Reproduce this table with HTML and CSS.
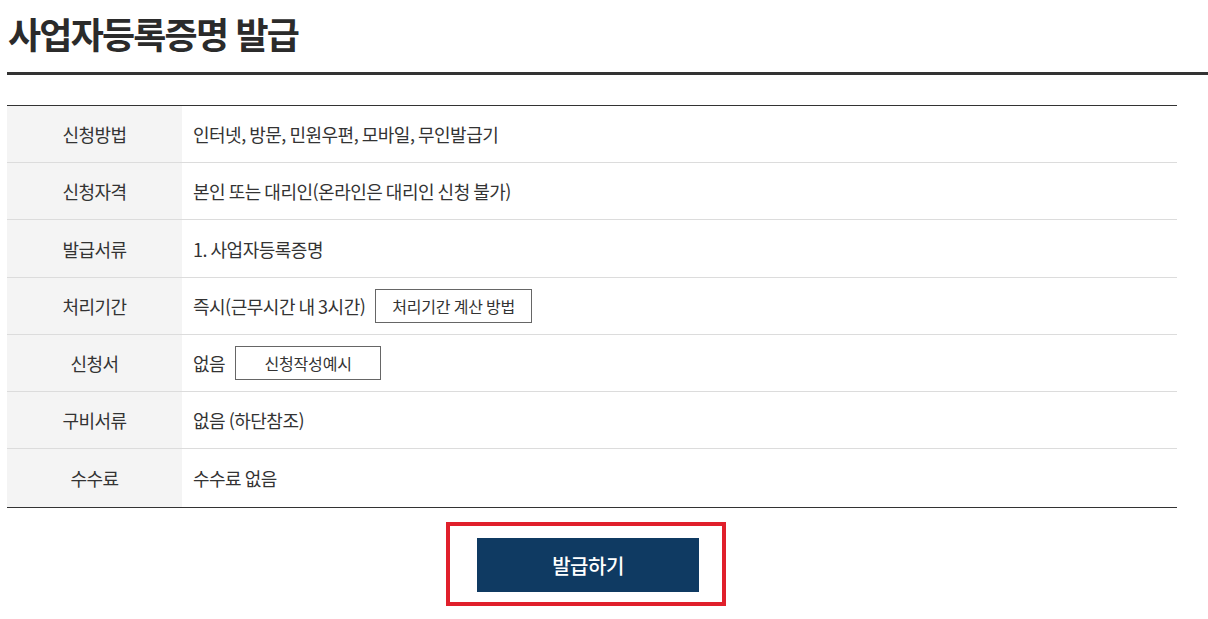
FILE: index.html
```html
<!DOCTYPE html>
<html lang="ko">
<head>
<meta charset="utf-8">
<title>사업자등록증명 발급</title>
<link rel="stylesheet" href="styles.css">
</head>
<body>
<div class="page">
  <h1 class="title">사업자등록증명 발급</h1>
  <div class="content">
    <table class="info">
      <tbody>
        <tr><th>신청방법</th><td>인터넷, 방문, 민원우편, 모바일, 무인발급기</td></tr>
        <tr><th>신청자격</th><td>본인 또는 대리인(온라인은 대리인 신청 불가)</td></tr>
        <tr class="tall"><th>발급서류</th><td>1. 사업자등록증명</td></tr>
        <tr><th>처리기간</th><td><span class="val">즉시(근무시간 내 3시간)</span><button class="small-btn">처리기간 계산 방법</button></td></tr>
        <tr><th>신청서</th><td><span class="val">없음</span><button class="small-btn wide">신청작성예시</button></td></tr>
        <tr><th>구비서류</th><td>없음 (하단참조)</td></tr>
        <tr><th>수수료</th><td>수수료 없음</td></tr>
      </tbody>
    </table>
    <div class="actions">
      <div class="highlight">
        <button class="issue-btn">발급하기</button>
      </div>
    </div>
  </div>
</div>
</body>
</html>
```
FILE: styles.css
```css
* { box-sizing: border-box; }
html, body { margin: 0; padding: 0; background: #fff; }
body {
  font-family: "Noto Sans CJK KR", "Noto Sans", sans-serif;
  color: #333;
}
.page {
  padding-left: 7px;
}
.title {
  margin: 0;
  padding: 8px 0 14px 1px;
  font-size: 36px;
  font-weight: 700;
  letter-spacing: -1.8px;
  line-height: 50px;
  color: #2b2b2b;
  border-bottom: 3px solid #333;
}
.content {
  width: 1170px;
  padding-top: 30px;
}
.info {
  width: 100%;
  border-collapse: collapse;
  border-top: 1px solid #333;
  border-bottom: 1px solid #333;
}
.info th, .info td {
  height: 57px;
  border-bottom: 1px solid #dcdcdc;
  font-size: 18px;
  letter-spacing: -0.5px;
  word-spacing: -1px;
  color: #333;
  padding: 0;
}
.info tr.tall th, .info tr.tall td { height: 58px; }
.info tr:last-child th, .info tr:last-child td { border-bottom: none; height: 59px; }
.info th {
  width: 175px;
  background: #f4f4f4;
  font-weight: 400;
  text-align: center;
}
.info td {
  text-align: left;
  padding-left: 11px;
}
.val { vertical-align: middle; }
.small-btn {
  vertical-align: middle;
  margin-left: 10px;
  height: 34px;
  padding: 0 16px;
  background: #fff;
  border: 1px solid #666;
  font-family: inherit;
  font-size: 16px;
  letter-spacing: -0.2px;
  word-spacing: -1px;
  color: #333;
}
.small-btn.wide { width: 146px; padding: 0; }
.actions {
  display: flex;
  justify-content: center;
  padding: 14px 0 0 0;
}
.highlight {
  border: 4px solid #e0202b;
  padding: 12px 23px 10px 27px;
  margin-left: -12px;
}
.issue-btn {
  display: block;
  width: 222px;
  height: 54px;
  background: #0f3a62;
  color: #fff;
  border: none;
  font-family: inherit;
  font-size: 20px;
  font-weight: 500;
  letter-spacing: -0.5px;
}
```
